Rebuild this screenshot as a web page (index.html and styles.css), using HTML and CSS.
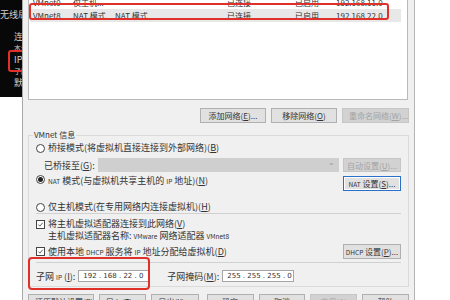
FILE: index.html
```html
<!DOCTYPE html>
<html lang="zh-CN">
<head>
    <meta charset="UTF-8">
    <meta name="viewport" content="width=device-width, initial-scale=1.0">
    <title>虚拟网络编辑器</title>
    <link rel="stylesheet" href="styles.css">
</head>
<body>
    <div class="screen">
        <div class="side">
            <div class="console">
                <div class="console-line first">无线局域网</div>
                <div class="console-line">连接</div>
                <div class="console-line small">本地</div>
                <div class="console-line">IP</div>
                <div class="console-line small">子网</div>
                <div class="console-line">默认</div>
                <div class="console-mark"></div>
            </div>
        </div>

        <div class="dialog">
            <div class="net-list">
                <div class="net-row">
                    <span>VMnet0</span><span>仅主机...</span><span>-</span><span>已连接</span><span>已启用</span><span>192.168.11.0</span>
                </div>
                <div class="net-row selected">
                    <span>VMnet8</span><span>NAT 模式</span><span>NAT 模式</span><span>已连接</span><span>已启用</span><span>192.168.22.0</span>
                </div>
                <div class="mark mark-row"></div>
            </div>

            <div class="actions">
                <button class="btn">添加网络(<u>E</u>)...</button>
                <button class="btn">移除网络(<u>O</u>)</button>
                <button class="btn" disabled>重命名网络(<u>W</u>)...</button>
            </div>

            <fieldset class="group">
                <legend>VMnet 信息</legend>

                <div class="opt">
                    <span class="radio"></span>
                    <span>桥接模式(将虚拟机直接连接到外部网络)(<u>B</u>)</span>
                </div>

                <div class="bridge">
                    <span class="label">已桥接至(<u>G</u>):</span>
                    <div class="combo"><span class="arrow">&#8964;</span></div>
                    <button class="btn side-btn" disabled>自动设置(<u>U</u>)...</button>
                </div>

                <div class="opt nat">
                    <span class="radio on"></span>
                    <span><small>NAT</small> 模式(与虚拟机共享主机的 <small>IP</small> 地址)(<u>N</u>)</span>
                    <button class="btn side-btn focus"><small>NAT</small> 设置(<u>S</u>)...</button>
                </div>

                <div class="opt host">
                    <span class="radio"></span>
                    <span>仅主机模式(在专用网络内连接虚拟机)(<u>H</u>)</span>
                </div>

                <div class="sep"></div>

                <div class="opt check-row">
                    <span class="check"><svg viewBox="0 0 9 9"><path d="M1.8 4.6 L3.7 6.6 L7.4 2.2" fill="none" stroke="#333" stroke-width="1"/></svg></span>
                    <span>将主机虚拟适配器连接到此网络(<u>V</u>)</span>
                </div>
                <div class="adapter">主机虚拟适配器名称: <small>VMware</small> 网络适配器 <small>VMnet8</small></div>

                <div class="opt dhcp">
                    <span class="check"><svg viewBox="0 0 9 9"><path d="M1.8 4.6 L3.7 6.6 L7.4 2.2" fill="none" stroke="#333" stroke-width="1"/></svg></span>
                    <span>使用本地 <small>DHCP</small> 服务将 <small>IP</small> 地址分配给虚拟机(<u>D</u>)</span>
                    <button class="btn side-btn"><small>DHCP</small> 设置(<u>P</u>)...</button>
                </div>

                <div class="sep"></div>

                <div class="subnet">
                    <span class="label">子网 <small>IP</small> (<u>I</u>):</span>
                    <div class="ip-box">192 . 168 . 22 . 0</div>
                    <span class="label mask-label">子网掩码(<u>M</u>):</span>
                    <div class="ip-box">255 . 255 . 255 . 0</div>
                    <div class="mark mark-subnet"></div>
                </div>
            </fieldset>

            <div class="footer">
                <button class="btn w66">还原默认设置(<u>R</u>)</button>
                <button class="btn">导入(<u>T</u>)...</button>
                <button class="btn w48">导出(<u>X</u>)...</button>
                <button class="btn gap">确定</button>
                <button class="btn">取消</button>
                <button class="btn" disabled>应用(<u>A</u>)</button>
                <button class="btn">帮助</button>
            </div>
        </div>
    </div>
</body>
</html>
```

FILE: styles.css
```css
body {
    margin: 0;
    background-color: #ffffff;
    font-family: "Noto Sans CJK SC", "Noto Sans", sans-serif;
    color: #333333;
    overflow: hidden;
}

.screen {
    display: flex;
    width: 450px;
    height: 300px;
    overflow: hidden;
}

/* zwart consolevenster links */
.side {
    width: 22px;
    flex: none;
}

.console {
    position: relative;
    height: 97px;
    background-color: #080808;
    overflow: hidden;
    font-family: "Noto Sans CJK SC", serif;
    color: #d0d0d0;
    font-size: 9px;
    line-height: 11px;
    padding-top: 9px;
    box-sizing: border-box;
    white-space: nowrap;
}

.console-line {
    padding-left: 14px;
    margin-bottom: 2px;
}

.console-line.first {
    padding-left: 0;
    margin-bottom: 11px;
}

.console-line.small {
    font-size: 7px;
    line-height: 8px;
}

.console-mark {
    position: absolute;
    left: 8px;
    top: 50px;
    width: 20px;
    height: 18px;
    border: 2px solid #e0302a;
    border-radius: 3px;
}

/* dialoogvenster */
.dialog {
    width: 393px;
    flex: none;
    box-sizing: border-box;
    background-color: #f0f0f0;
    border-left: 1px solid #a8a8a8;
    border-right: 1px solid #b4b4b4;
    padding: 0 5px;
}

.net-list {
    position: relative;
    height: 104px;
    box-sizing: border-box;
    margin-right: 1px;
    background-color: #ffffff;
    border: 1px solid #b9b9b9;
    border-top: none;
    padding: 0 6px 0 4px;
    font-size: 8px;
}

.net-row {
    display: grid;
    grid-template-columns: 40px 42px 112px 68px 41px 1fr;
    height: 13px;
    line-height: 13px;
    white-space: nowrap;
}

.net-row:first-child {
    margin-top: -4px;
}

.net-row.selected {
    background-color: #e8e8e8;
    margin-left: -3px;
    padding-left: 3px;
}

.mark {
    position: absolute;
    border: 2px solid #e0302a;
    border-radius: 3px;
}

.mark-row {
    left: 0;
    top: 7px;
    width: 356px;
    height: 13px;
}

.btn {
    font-family: "Noto Sans CJK SC", "Noto Sans", sans-serif;
    font-size: 8px;
    color: #333333;
    height: 15px;
    padding: 0 6px;
    background-color: #e1e1e1;
    border: 1px solid #b0b0b0;
    border-radius: 0;
    line-height: 13px;
    white-space: nowrap;
    box-sizing: border-box;
}

.btn[disabled] {
    background-color: #d2d2d2;
    border-color: #c6c6c6;
    color: #a3a3a3;
}

.btn small,
.opt small,
.adapter small,
.label small {
    font-size: 6.5px;
}

.actions {
    display: flex;
    justify-content: flex-end;
    gap: 5px;
    margin-top: 8px;
}

.actions .btn {
    width: 66px;
}

.actions .btn:last-child {
    width: 67px;
}

.group {
    margin: 6px 0 0 0;
    padding: 0 7px 0 7px;
    border: 1px solid #dadada;
    height: 158px;
    box-sizing: border-box;
    font-size: 9px;
}

.group legend {
    font-size: 8px;
    line-height: 12px;
    padding: 0 1px;
    margin-left: -3px;
}

.opt {
    display: flex;
    align-items: center;
    height: 12px;
    line-height: 12px;
    white-space: nowrap;
}

.opt:first-of-type {
    margin-top: 1px;
}

.radio {
    width: 9px;
    height: 9px;
    border: 1px solid #444444;
    border-radius: 50%;
    box-sizing: border-box;
    background-color: #ffffff;
    margin-right: 3px;
    flex: none;
    display: flex;
    align-items: center;
    justify-content: center;
}

.radio.on::after {
    content: "";
    width: 5px;
    height: 5px;
    border-radius: 50%;
    background-color: #222222;
}

.check {
    width: 9px;
    height: 9px;
    border: 1px solid #444444;
    box-sizing: border-box;
    background-color: #ffffff;
    margin-right: 3px;
    flex: none;
    display: flex;
}

.check svg {
    width: 7px;
    height: 7px;
}

.side-btn {
    margin-left: auto;
    width: 58px;
    padding: 0;
}

.focus {
    border: 1px solid #2a6fc9;
    box-shadow: inset 0 0 0 1px #ffffff;
}

.bridge {
    display: flex;
    align-items: center;
    height: 14px;
    margin-top: 4px;
    padding-left: 1px;
}

.bridge .label {
    width: 52px;
    flex: none;
    padding-left: 7px;
    white-space: nowrap;
}

.combo {
    width: 241px;
    height: 14px;
    background-color: #cfcfcf;
    position: relative;
    margin-left: 2px;
}

.combo .arrow {
    position: absolute;
    right: 4px;
    top: -2px;
    font-size: 8px;
    color: #9a9a9a;
}

.bridge .side-btn {
    height: 14px;
}

.nat {
    align-items: flex-start;
    height: 16px;
    margin-top: 3px;
}

.nat .side-btn {
    margin-top: 1px;
}

.host {
    margin-top: 10px;
}

.sep {
    height: 1px;
    background-color: #d0d0d0;
}

.check-row {
    margin-top: 4px;
}

.adapter {
    padding-left: 12px;
    height: 12px;
    line-height: 12px;
    white-space: nowrap;
}

.dhcp {
    height: 15px;
    margin-top: 2px;
    margin-bottom: 3px;
}

.subnet {
    position: relative;
    display: flex;
    align-items: center;
    height: 12px;
    margin-top: 7px;
    white-space: nowrap;
}

.subnet .label {
    margin-right: 3px;
}

.mask-label {
    margin-left: 17px;
}

.ip-box {
    width: 72px;
    height: 12px;
    box-sizing: border-box;
    background-color: #ffffff;
    border: 1px solid #a5a5a5;
    font-size: 7px;
    line-height: 10px;
    padding-left: 4px;
    font-family: "DejaVu Sans", sans-serif;
}

.mark-subnet {
    left: -8px;
    top: -13px;
    width: 118px;
    height: 29px;
    border-radius: 4px;
}

.footer {
    display: flex;
    gap: 5px;
    margin-top: 7px;
}

.footer .btn {
    width: 47px;
}

.footer .w66 {
    width: 66px;
}

.footer .w48 {
    width: 48px;
}

.footer .gap {
    margin-left: 3px;
}
```
